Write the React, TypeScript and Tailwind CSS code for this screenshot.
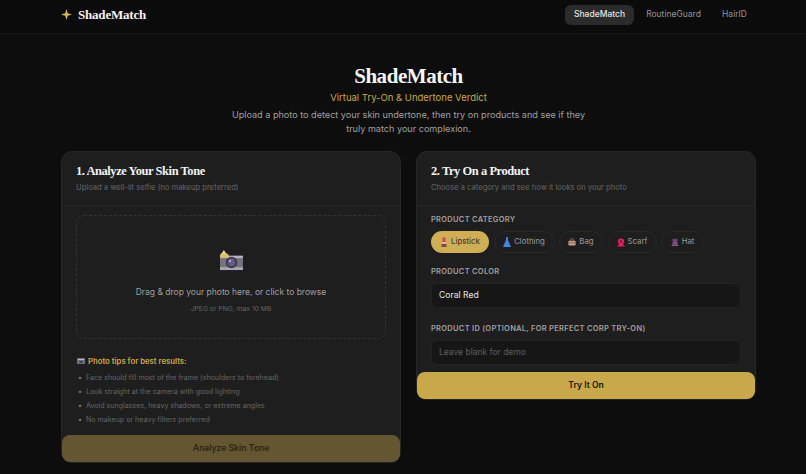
import { PropsWithChildren } from "react";

const sans = "font-['Inter','Noto_Sans',sans-serif]";
const serif = "font-['Liberation_Serif',serif]";

const CameraIcon = () => (
  <svg width="25" height="21" viewBox="0 0 26 22" className="block">
    <rect x="1" y="6" width="24" height="15" rx="1.5" fill="#77727f" />
    <rect x="1" y="18" width="24" height="3" fill="#a9a6b2" />
    <rect x="1" y="6" width="24" height="2.5" fill="#b5b2bc" />
    <circle cx="13" cy="13" r="6" fill="#3c3a48" />
    <circle cx="13" cy="13" r="4" fill="#6a5a8a" />
    <circle cx="11.5" cy="11.5" r="1" fill="#cfcbe0" />
    <path d="M5 0 L7 3 L10 5 L10 8 L1 8 L1 5 L3 3 Z" fill="#d9c06a" />
    <path d="M5 1 L6.5 4 L3.5 4 Z" fill="#f2e2a4" />
  </svg>
);

const TipsIcon = () => (
  <svg width="8" height="6" viewBox="0 0 8 6" className="block">
    <rect width="8" height="6" fill="#6f6d80" />
    <rect x="1" y="1" width="6" height="1" fill="#b8b6c6" />
    <rect x="2.5" y="3" width="3" height="2" fill="#3f3d4e" />
  </svg>
);

const LipstickIcon = () => (
  <svg width="8" height="10" viewBox="0 0 8 10" className="block">
    <path d="M2.5 1 L5.5 0 V5 H2.5 Z" fill="#d8405c" />
    <rect x="2" y="5" width="4" height="2" fill="#e8b0a0" />
    <rect x="1.5" y="7" width="5" height="3" fill="#7a4a40" />
  </svg>
);

const DressIcon = () => (
  <svg width="8" height="10" viewBox="0 0 8 10" className="block">
    <path d="M3 0 H5 V3 L8 10 H0 L3 3 Z" fill="#3f86dc" />
  </svg>
);

const BagIcon = () => (
  <svg width="8" height="8" viewBox="0 0 10 9" className="block">
    <path d="M3 3 V1.5 Q3 .5 4 .5 H6 Q7 .5 7 1.5 V3" fill="none" stroke="#a87868" />
    <rect x="0.5" y="3" width="9" height="6" rx="1" fill="#c89a88" />
    <rect x="0.5" y="5" width="9" height="1" fill="#8a5a50" />
  </svg>
);

const ScarfIcon = () => (
  <svg width="8" height="9" viewBox="0 0 10 10" className="block">
    <path d="M5 0 Q9 0 9 4 Q9 6 7 7 L10 10 H0 L3 7 Q1 6 1 4 Q1 0 5 0 Z" fill="#e0245e" />
    <circle cx="5" cy="3.8" r="1.7" fill="#7a1a3a" />
  </svg>
);

const HatIcon = () => (
  <svg width="8" height="9" viewBox="0 0 10 10" className="block">
    <rect x="2" y="0.5" width="6" height="7" fill="#6a4a78" />
    <rect x="2" y="5.5" width="6" height="1.5" fill="#a04a80" />
    <rect x="0.5" y="7.5" width="9" height="2" rx="1" fill="#84588e" />
  </svg>
);

const Label = ({ children }: PropsWithChildren) => (
  <p className="text-[7.5px] leading-[12px] font-semibold tracking-[0.28px] text-[#a0a0a0] uppercase">{children}</p>
);

const Card = ({ title, sub, children }: PropsWithChildren<{ title: string; sub: string }>) => (
  <div className="flex-1 min-w-0 rounded-[11px] bg-[#1e1e1e] border border-[#262626] self-start">
    <div className="px-[14px] pt-[11px] pb-[11px] border-b border-[#272727]">
      <h2 className={`${serif} text-[12.5px] leading-[16px] tracking-[-0.45px] font-bold text-[#f2f2f2]`}>{title}</h2>
      <p className="mt-[3px] text-[7.6px] leading-[12px] text-[#666666]">{sub}</p>
    </div>
    {children}
  </div>
);

const categories = [
  { name: "Lipstick", icon: <LipstickIcon />, width: "w-[58px]", active: true },
  { name: "Clothing", icon: <DressIcon />, width: "w-[61px]" },
  { name: "Bag", icon: <BagIcon />, width: "w-[44px]" },
  { name: "Scarf", icon: <ScarfIcon />, width: "w-[49px]" },
  { name: "Hat", icon: <HatIcon />, width: "w-[43px]" },
];

const tips = [
  "Face should fill most of the frame (shoulders to forehead)",
  "Look straight at the camera with good lighting",
  "Avoid sunglasses, heavy shadows, or extreme angles",
  "No makeup or heavy filters preferred",
];

export default function App() {
  return (
    <div className={`${sans} h-[474px] overflow-hidden bg-[#0d0d0d] text-white`}>
      <header className="h-[34px] pb-[4px] border-b border-[#1a1a1a] bg-[#0b0b0b] flex items-center justify-between pl-[61px] pr-[50px]">
        <div className="flex items-center gap-[6px]">
          <svg width="11" height="11" viewBox="0 0 12 12">
            <path d="M6 0 L7.4 4.6 L12 6 L7.4 7.4 L6 12 L4.6 7.4 L0 6 L4.6 4.6 Z" fill="#d4b25a" />
          </svg>
          <span className={`${serif} text-[13px] tracking-[-0.2px] font-bold text-[#f2f2f2]`}>ShadeMatch</span>
        </div>
        <nav className="flex items-center gap-[3px] text-[8.5px]">
          <span className="h-[20px] w-[69px] rounded-[6px] bg-[#2b2b2b] text-[#e4e4e4] font-medium flex items-center justify-center">ShadeMatch</span>
          <span className="h-[20px] w-[73px] text-[#949494] flex items-center justify-center">RoutineGuard</span>
          <span className="h-[20px] w-[43px] text-[#949494] flex items-center justify-center">HairID</span>
        </nav>
      </header>

      <main className="pl-[61px] pr-[50px]">
        <div className="pt-[30px] text-center">
          <h1 className={`${serif} text-[21px] leading-[24px] tracking-[-0.45px] font-bold text-[#f5f5f5]`}>ShadeMatch</h1>
          <p className="mt-[3px] text-[9.5px] leading-[13px] text-[#c9a84c]">Virtual Try-On &amp; Undertone Verdict</p>
          <p className="mt-[4px] mx-auto w-[360px] text-[9.1px] leading-[14px] text-[#a0a0a0]">
            Upload a photo to detect your skin undertone, then try on products and see if they truly match your complexion.
          </p>
        </div>

        <div className="mt-[15px] flex gap-[15px]">
          <Card title="1. Analyze Your Skin Tone" sub="Upload a well-lit selfie (no makeup preferred)">
            <div className="px-[14px] pt-[9px]">
              <div className="h-[124px] rounded-[8px] border border-dashed border-[#333333] flex flex-col items-center pt-[34px]">
                <CameraIcon />
                <p className="mt-[15px] text-[8.5px] leading-[13px] text-[#a0a0a0]">Drag &amp; drop your photo here, or click to browse</p>
                <p className="mt-[4px] text-[6.75px] leading-[12px] text-[#666666]">JPEG or PNG, max 10 MB</p>
              </div>
              <div className="mt-[16px] flex items-center gap-[3px] pl-[1px]">
                <TipsIcon />
                <span className="text-[7.75px] leading-[12px] font-semibold text-[#c9a84c]">Photo tips for best results:</span>
              </div>
              <ul className="mt-[4px] text-[7.1px] leading-[14px] text-[#666666]">
                {tips.map((t) => (
                  <li key={t} className="flex items-center">
                    <span className="w-[10px] pl-[2px] text-[#7a7a7a]">•</span>
                    {t}
                  </li>
                ))}
              </ul>
            </div>
            <button className="mt-[8px] w-full h-[27px] rounded-[8px] bg-[#655632] text-[8.6px] font-semibold text-[#2a2516]">Analyze Skin Tone</button>
          </Card>

          <Card title="2. Try On a Product" sub="Choose a category and see how it looks on your photo">
            <div className="px-[14px] pt-[8px]">
              <Label>Product Category</Label>
              <div className="mt-[5px] flex gap-[4.5px]">
                {categories.map((c) => (
                  <span
                    key={c.name}
                    className={`${c.width} ${
                      c.active
                        ? "h-[22px] rounded-full bg-[#cfae55] text-[#4a3f24] flex items-center justify-center gap-[3px] text-[7.8px] font-medium"
                        : "h-[22px] rounded-full border border-[#292929] text-[#9a9a9a] flex items-center justify-center gap-[3px] text-[7.8px]"
                    }`}
                  >
                    {c.icon}
                    {c.name}
                  </span>
                ))}
              </div>
              <div className="mt-[13px]">
                <Label>Product Color</Label>
                <div className="mt-[5px] h-[25px] rounded-[6px] bg-[#161616] border border-[#232323] flex items-center px-[7px] text-[8.6px] text-[#e6e6e6]">Coral Red</div>
              </div>
              <div className="mt-[15px]">
                <Label>Product ID (optional, for Perfect Corp try-on)</Label>
                <div className="mt-[5px] h-[25px] rounded-[6px] bg-[#161616] border border-[#232323] flex items-center px-[7px] text-[8.5px] text-[#5e5e5e]">Leave blank for demo</div>
              </div>
            </div>
            <button className="mt-[7px] w-full h-[27px] rounded-[8px] bg-[#c9a84c] text-[8.6px] font-semibold text-[#1c1708]">Try It On</button>
          </Card>
        </div>
      </main>
    </div>
  );
}
